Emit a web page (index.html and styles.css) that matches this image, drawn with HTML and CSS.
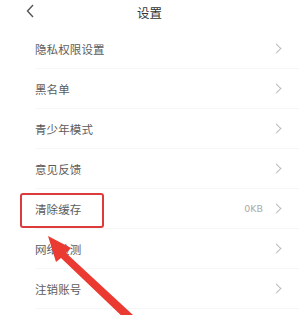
FILE: index.html
```html
<!DOCTYPE html>
<html lang="zh-CN">
<head>
  <meta charset="UTF-8">
  <meta name="viewport" content="width=device-width, initial-scale=1.0">
  <title>设置</title>
  <link rel="stylesheet" href="styles.css">
</head>
<body>
  <div class="page">
    <header class="topbar">
      <svg class="back" width="8" height="14" viewBox="0 0 8 14"><path d="M7 1 L1.5 7 L7 13" fill="none" stroke="#555" stroke-width="1.4"/></svg>
      <h1>设置</h1>
    </header>

    <ul class="menu">
      <li class="row"><span class="label">隐私权限设置</span><span class="arrow"></span></li>
      <li class="row"><span class="label">黑名单</span><span class="arrow"></span></li>
      <li class="row"><span class="label">青少年模式</span><span class="arrow"></span></li>
      <li class="row"><span class="label">意见反馈</span><span class="arrow"></span></li>
      <li class="row"><span class="label">清除缓存</span><span class="value">0KB</span><span class="arrow"></span></li>
      <li class="row"><span class="label">网络检测</span><span class="arrow"></span></li>
      <li class="row"><span class="label">注销账号</span><span class="arrow"></span></li>
    </ul>

    <!-- annotation overlay -->
    <div class="highlight"></div>
    <svg class="pointer" width="299" height="315" viewBox="0 0 299 315">
      <polygon points="48,236 71,248 66,253 133,315 127,321 61,258 56,262" fill="#ea3a32"/>
    </svg>
  </div>
</body>
</html>
```

FILE: styles.css
```css
body {
  margin: 0;
  background: #fff;
  font-family: "Noto Sans CJK SC", "Noto Sans", sans-serif;
}

.page {
  position: relative;
  width: 299px;
  height: 315px;
  overflow: hidden;
}

.topbar {
  height: 24px;
  display: flex;
  align-items: center;
  justify-content: center;
  position: relative;
}

.topbar h1 {
  margin: 0;
  font-size: 12.5px;
  font-weight: normal;
  color: #333;
}

.back {
  position: absolute;
  left: 26px;
  top: 4px;
}

.menu {
  list-style: none;
  margin: 0;
  padding: 5px 0 0 0;
}

.row {
  height: 40px;
  margin-left: 35px;
  padding-right: 16px;
  display: flex;
  align-items: center;
  border-bottom: 1px solid #f6f6f6;
  box-sizing: border-box;
}

.label {
  flex: 1;
  font-size: 11.5px;
  color: #5c5c5c;
  letter-spacing: 0.1px;
}

.value {
  font-size: 9.5px;
  color: #aaa;
  margin-right: 10px;
  font-family: "DejaVu Sans", sans-serif;
}

.arrow {
  width: 6px;
  height: 6px;
  border-top: 1px solid #bbb;
  border-right: 1px solid #bbb;
  transform: rotate(45deg);
  margin-right: 3px;
}

.highlight {
  position: absolute;
  left: 20px;
  top: 193px;
  width: 80px;
  height: 31px;
  border: 2px solid #db3b3b;
  border-radius: 3px;
}

.pointer {
  position: absolute;
  left: 0;
  top: 0;
}
```
